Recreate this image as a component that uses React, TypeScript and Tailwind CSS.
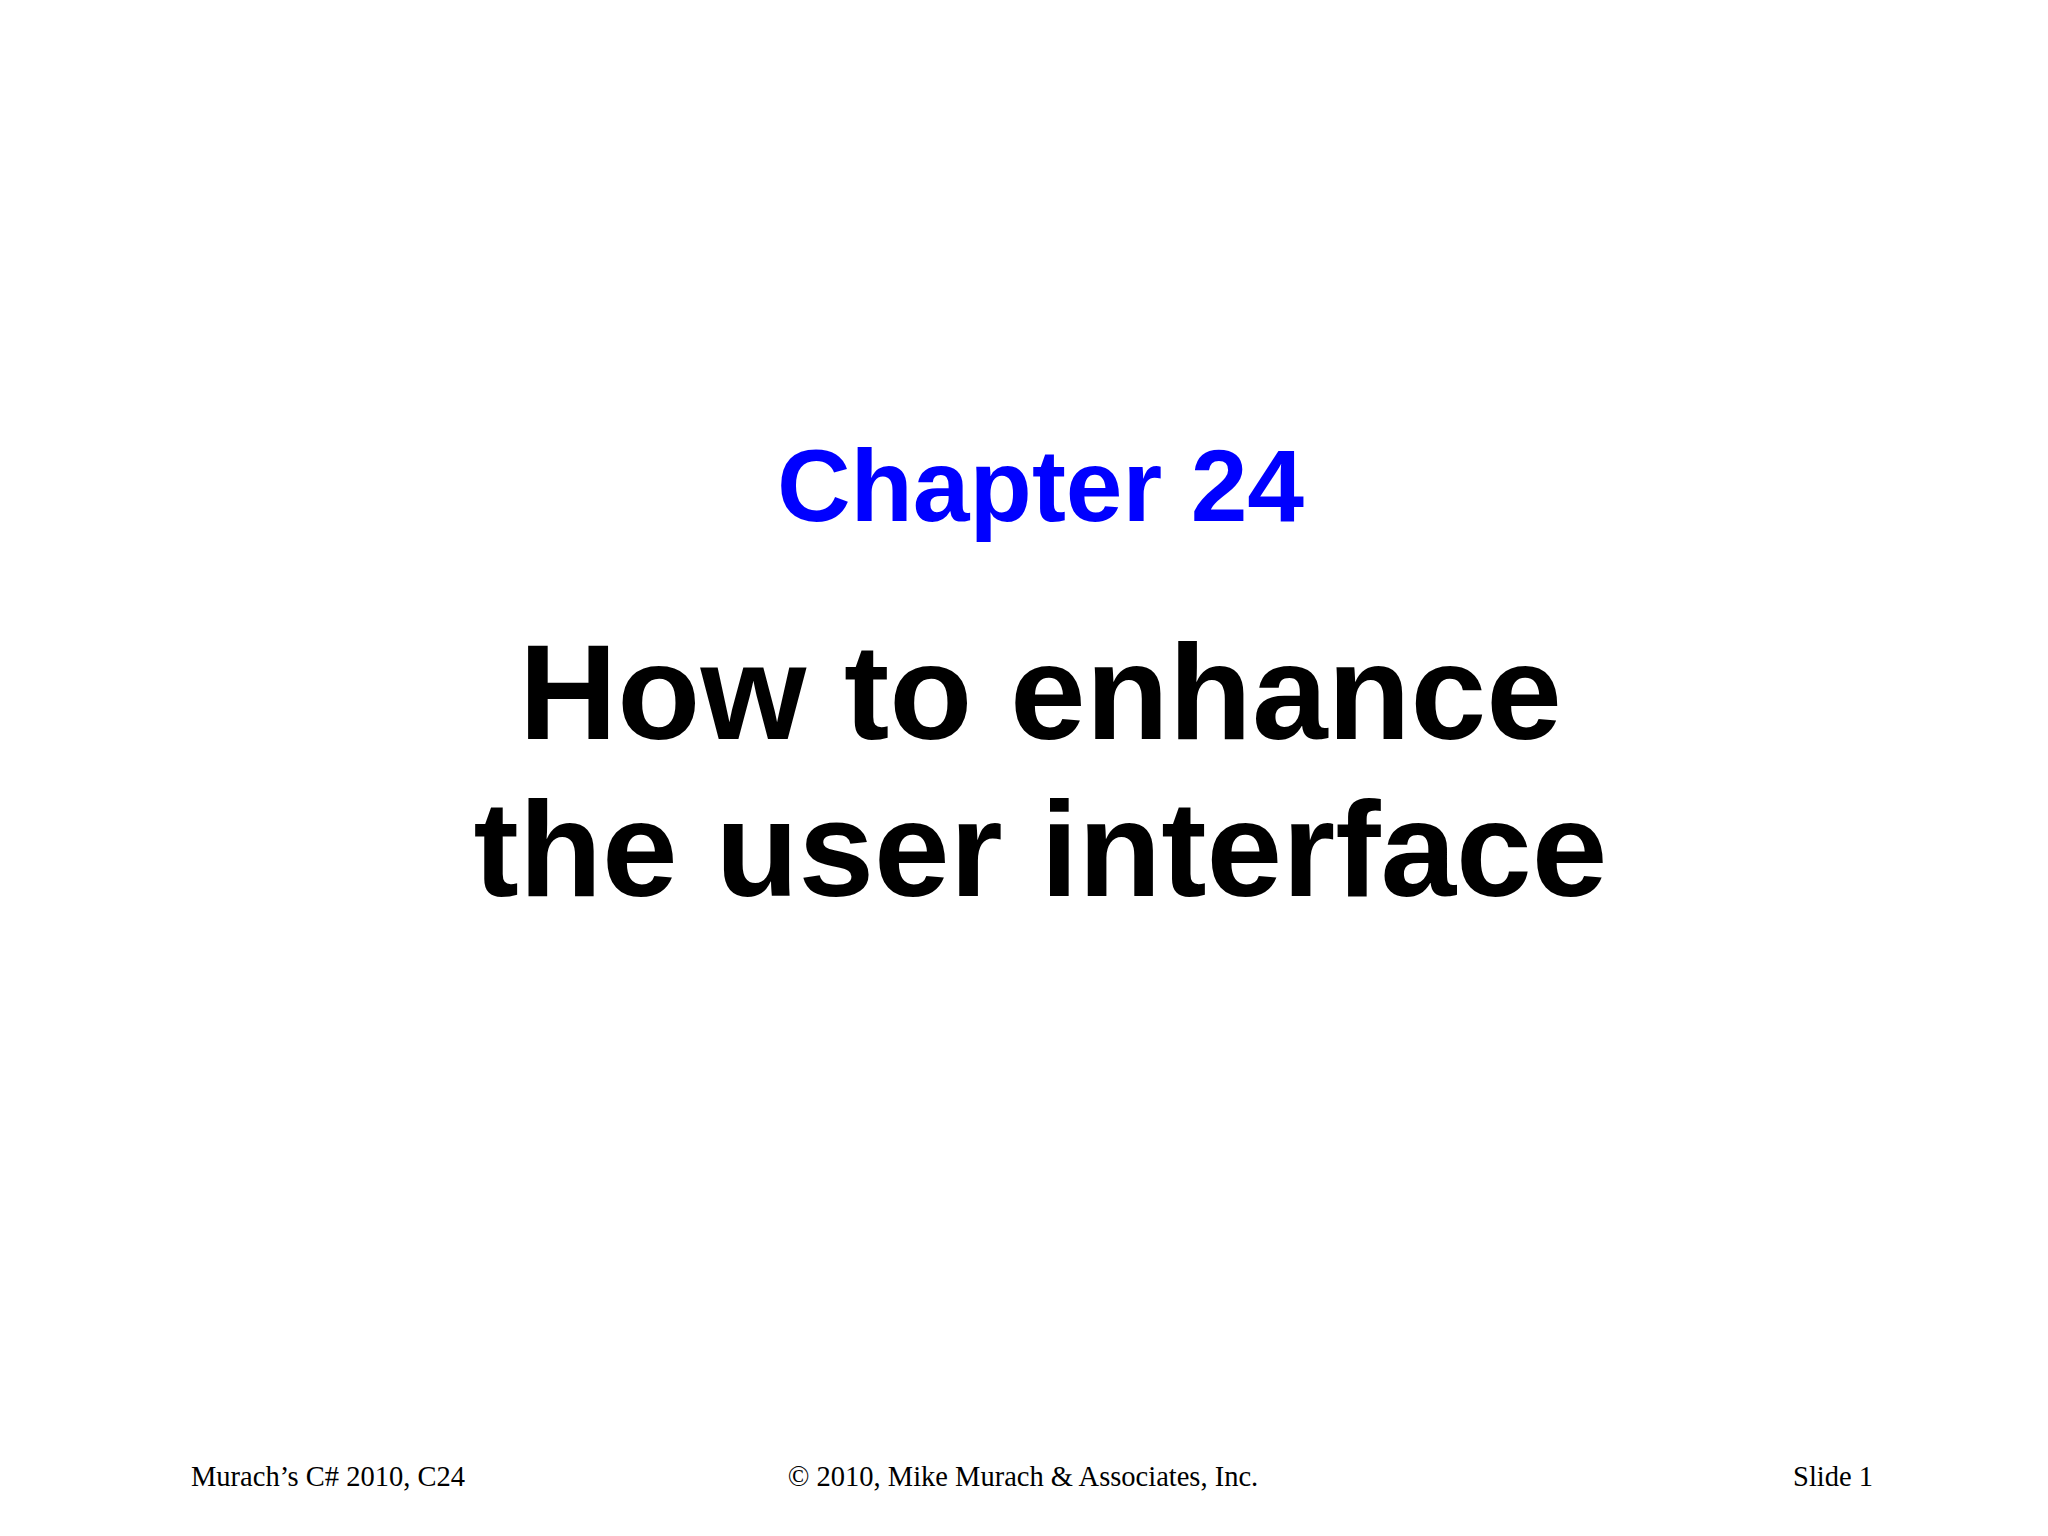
import React from 'react';

const App = () => {
  return (
    <div className="w-[2048px] h-[1536px] bg-white flex flex-col overflow-hidden">
      {/* Title block */}
      <div className="pl-[33px] pt-[435px] flex flex-col items-center text-center font-['Liberation_Sans',Arial,sans-serif] font-bold">
        <h2 className="text-[102px] leading-none text-[#0000ff]">Chapter 24</h2>
        <h1 className="mt-[77px] text-[136px] leading-[157px] text-black">
          How to enhance
          <br />
          the user interface
        </h1>
      </div>

      {/* Footer */}
      <div className="mt-auto mb-[43px] pl-[191px] pr-[175px] grid grid-cols-[1fr_auto_1fr] items-center font-['Liberation_Serif','Times_New_Roman',serif] text-[28.5px] leading-[32px] text-black">
        <span>Murach’s C# 2010, C24</span>
        <span className="pr-[18px]">© 2010, Mike Murach &amp; Associates, Inc.</span>
        <span className="text-right">Slide 1</span>
      </div>
    </div>
  );
};

export default App;
